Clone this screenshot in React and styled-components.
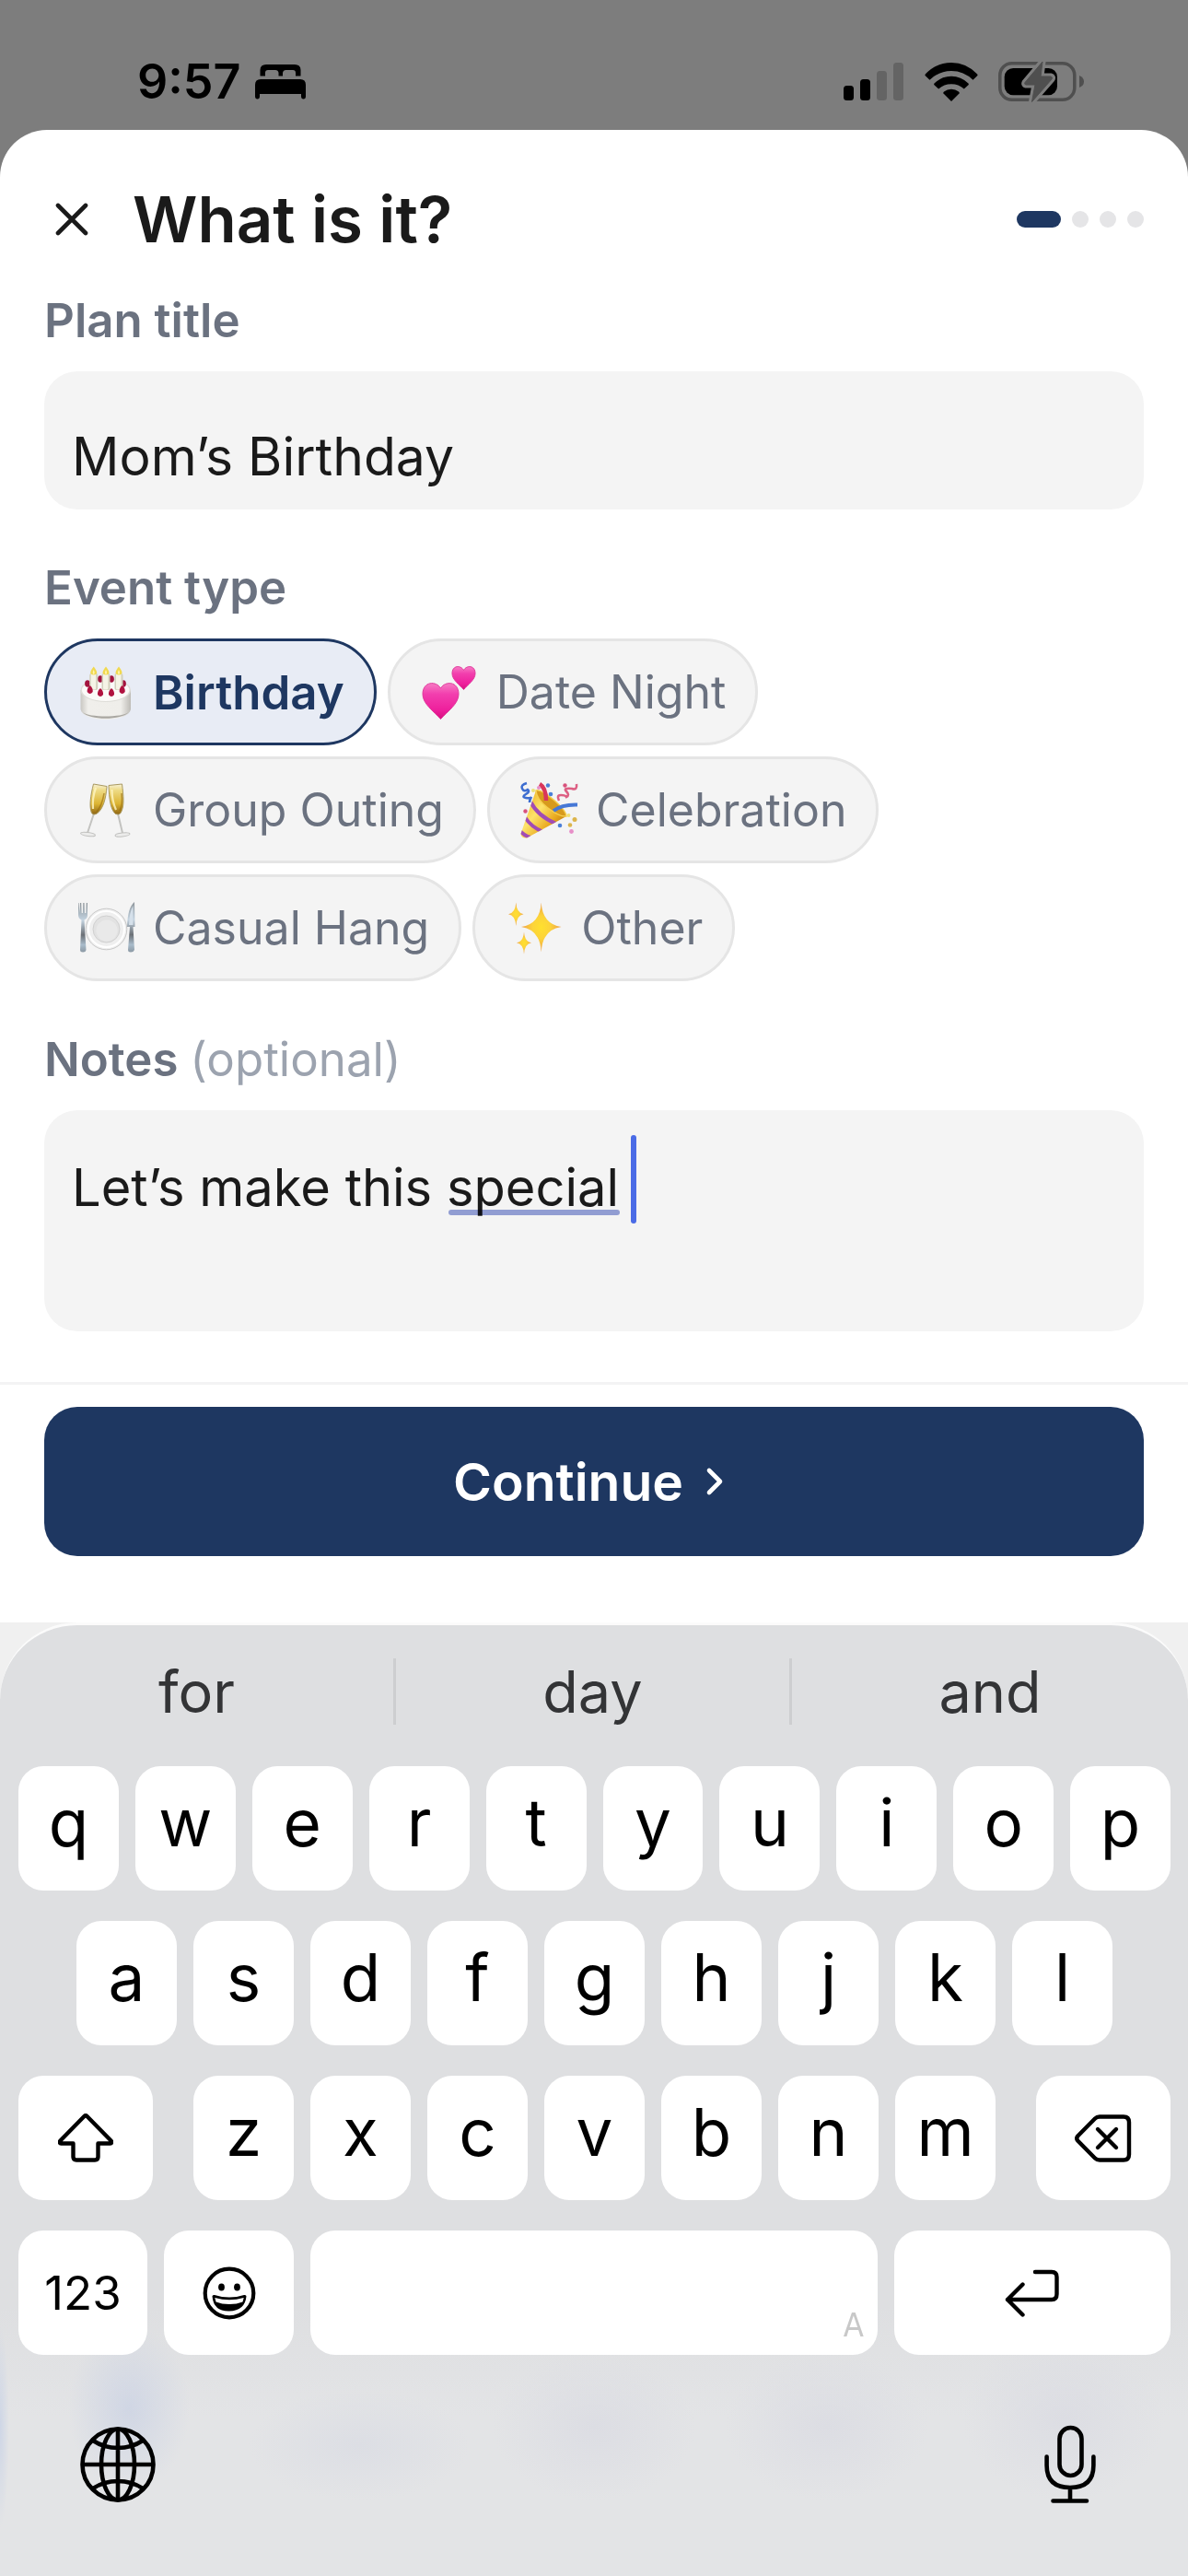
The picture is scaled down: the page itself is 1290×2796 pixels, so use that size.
import React, { useState } from 'react';
import styled, { createGlobalStyle } from 'styled-components';

const NAVY = '#1e3761';
const INK = '#1a1a1a';
const SLATE = '#6b7280';
const FIELD = '#f4f4f4';

const GlobalStyle = createGlobalStyle`
  * {
    box-sizing: border-box;
  }
  body {
    margin: 0;
    background: #7d7d7d;
    font-family: Inter, "Liberation Sans", sans-serif;
  }
  button, input, textarea {
    font-family: inherit;
    margin: 0;
    border: 0;
    padding: 0;
    outline: 0;
  }
  button {
    cursor: pointer;
  }
  svg {
    display: block;
    flex: none;
  }
`;

const Screen = styled.div`
  min-height: 100vh;
  display: flex;
  flex-direction: column;
`;

/* ---------- status bar ---------- */

const StatusBar = styled.header`
  height: 141px;
  padding: 36px 113px 0 149px;
  display: flex;
  align-items: center;
  justify-content: space-between;
`;

const StatusGroup = styled.div`
  display: flex;
  align-items: center;
  gap: ${(p) => p.$gap}px;
`;

const Clock = styled.time`
  font-size: 52px;
  line-height: 60px;
  font-weight: 600;
  color: #000;
`;

/* ---------- sheet ---------- */

const Sheet = styled.main`
  background: #fff;
  border-radius: 51px 51px 0 0;
`;

const SheetHeader = styled.div`
  display: flex;
  align-items: center;
  min-height: 97px;
  margin: 48px 48px 30px;
`;

const CloseButton = styled.button`
  width: 60px;
  height: 60px;
  display: grid;
  place-items: center;
  background: none;
`;

const Title = styled.h1`
  flex: 1;
  margin: 0 0 0 36px;
  font-size: 69px;
  line-height: 84px;
  font-weight: 600;
  color: ${INK};
`;

const Steps = styled.div`
  display: flex;
  gap: 12px;
`;

const Step = styled.span`
  width: ${(p) => (p.$active ? 48 : 18)}px;
  height: 18px;
  border-radius: 9px;
  background: ${(p) => (p.$active ? NAVY : '#e5e5e7')};
`;

const Form = styled.div`
  padding: 0 48px 55px;
  display: flex;
  flex-direction: column;
  gap: 53px;
`;

const Field = styled.div`
  display: flex;
  flex-direction: column;
  gap: 23px;
`;

const Label = styled.label`
  font-size: 51px;
  line-height: 64px;
  font-weight: 600;
  color: ${SLATE};
`;

const Hint = styled.span`
  font-weight: 400;
  color: #9ca3af;
`;

const TextInput = styled.input`
  width: 100%;
  height: 150px;
  padding: 34px 30px 0;
  border-radius: 36px;
  background: ${FIELD};
  color: ${INK};
  font-size: 57px;
`;

const NotesBox = styled.div`
  position: relative;
`;

const NotesInput = styled.textarea`
  display: block;
  width: 100%;
  height: 240px;
  padding: 48px 30px;
  border-radius: 36px;
  background: ${FIELD};
  color: ${INK};
  font-size: 56px;
  line-height: 72px;
  resize: none;
  caret-color: transparent;
`;

const Underline = styled.span`
  position: absolute;
  left: 439px;
  top: 108px;
  width: 186px;
  height: 6px;
  border-radius: 3px;
  background: #98a4dc;
  mix-blend-mode: multiply;
`;

const Caret = styled.span`
  position: absolute;
  left: 637px;
  top: 27px;
  width: 6px;
  height: 96px;
  border-radius: 3px;
  background: #4a6be6;
`;

const Chips = styled.div`
  display: flex;
  flex-wrap: wrap;
  gap: 12px;
  max-width: 960px;
`;

const Chip = styled.button`
  height: 116px;
  padding: 0 32px;
  display: flex;
  align-items: center;
  gap: 19px;
  border: 3px solid ${(p) => (p.$selected ? NAVY : '#e5e5e5')};
  border-radius: 58px;
  background: ${(p) => (p.$selected ? '#e8ecf5' : FIELD)};
  color: ${(p) => (p.$selected ? NAVY : SLATE)};
  font-size: ${(p) => (p.$selected ? 51 : 50)}px;
  font-weight: ${(p) => (p.$selected ? 600 : 400)};
`;

const SheetFooter = styled.div`
  border-top: 3px solid #f3f3f4;
  padding: 24px 48px 72px;
`;

const ContinueButton = styled.button`
  width: 100%;
  height: 162px;
  display: flex;
  align-items: center;
  justify-content: center;
  gap: 24px;
  padding-right: 8px;
  border-radius: 36px;
  background: ${NAVY};
  color: #fff;
  font-size: 57px;
  font-weight: 600;
`;

/* ---------- keyboard ---------- */

const KeyboardArea = styled.section`
  flex: 1;
  display: flex;
  background: #f0f0f0;
`;

const Keyboard = styled.div`
  flex: 1;
  display: flex;
  flex-direction: column;
  border-top: 3px solid #fbfbfb;
  border-radius: 84px 84px 0 0;
  background:
    radial-gradient(ellipse 66px 90px at 140px 850px, #d0d6e4 0%, #d0d6e400 100%),
    radial-gradient(ellipse 10px 110px at 0 870px, #ced6e6 0%, #ced6e600 100%),
    radial-gradient(ellipse 120px 60px at 390px 890px, #dcdee4 0%, #dcdee400 100%),
    radial-gradient(ellipse 110px 80px at 645px 870px, #dcdde3 0%, #dcdde300 100%),
    radial-gradient(ellipse 110px 80px at 898px 870px, #dcdde3 0%, #dcdde300 100%),
    radial-gradient(ellipse 110px 90px at 1155px 860px, #dcdde3 0%, #dcdde300 100%),
    linear-gradient(#dedfe1 740px, #e3e4e6 860px);
`;

const Suggestions = styled.div`
  display: grid;
  grid-template-columns: repeat(3, 1fr);
  align-items: center;
  height: 144px;
  margin-bottom: 9px;
`;

const Suggestion = styled.button`
  height: 72px;
  background: none;
  color: #333436;
  font-size: 63px;
  line-height: 72px;

  &:not(:last-child) {
    border-right: 3px solid #cdced0;
  }
`;

const Rows = styled.div`
  display: flex;
  flex-direction: column;
  gap: 33px;
  padding: 0 19px 0 20px;
`;

const KeyRow = styled.div`
  display: flex;
  justify-content: space-between;
  gap: 18px;
  padding: 0 ${(p) => p.$inset || 0}px;
`;

const KeyGroup = styled.div`
  flex: 1;
  display: flex;
  gap: 18px;
  margin: 0 26px;
`;

const Key = styled.button`
  position: relative;
  flex: ${(p) => (p.$width ? `0 0 ${p.$width}px` : '1 1 0')};
  min-width: 0;
  height: 135px;
  padding-bottom: ${(p) => (p.$flat ? 0 : 13)}px;
  display: flex;
  align-items: center;
  justify-content: center;
  border-radius: 27px;
  background: #fff;
  color: #000;
  font-size: ${(p) => (p.$flat ? 51 : 71)}px;
`;

const Language = styled.span`
  position: absolute;
  right: 15px;
  bottom: 10px;
  color: #c8c8c8;
  font-family: "Liberation Sans Narrow", "DejaVu Sans Condensed", sans-serif;
  font-size: 36px;
  line-height: 44px;
`;

const KeyboardFooter = styled.div`
  display: flex;
  align-items: center;
  justify-content: space-between;
  padding: 76px 100px 0 87px;
`;

const BareButton = styled.button`
  background: none;
`;

/* ---------- icons ---------- */

const BedIcon = () => (
  <svg width="55" height="38" viewBox="0 0 55 38">
    <path d="M5.500 12.500V6Q5.500 0 12 0H43Q49.500 0 49.500 6V12.500H44V9Q44 6 41 6H33.500Q30.500 6 30 9V12.500H25.500V9Q25 6 22 6H14Q11 6 11 9V12.500Z" />
    <path d="M0 22Q0 16 6 16H49Q55 16 55 22V34.500Q55 37.500 52.500 37.500T50 34.500V32H5V34.500Q5 37.500 2.500 37.500T0 34.500Z" />
  </svg>
);

const SignalIcon = () => (
  <svg width="66" height="42" viewBox="0 0 66 42">
    <rect x="0" y="25" width="11" height="16" rx="3.500" />
    <rect x="18" y="18" width="11" height="23" rx="3.500" />
    <rect x="36" y="9" width="11" height="32" rx="3.500" fill="#646464" />
    <rect x="54" y="0" width="11" height="41" rx="3.500" fill="#646464" />
  </svg>
);

const WifiIcon = () => (
  <svg width="58" height="42" viewBox="0 0 58 42">
    <path d="M29 42 20.500 33.500Q19.800 32.500 21 31.500Q24.500 28.800 29 28.800T37 31.500Q38.200 32.500 37.500 33.500Z" />
    <path d="M10.500 22.500Q18.500 14.700 29 14.700T47.500 22.500Q48.200 23.500 47.500 24.300L42.800 28.500Q37 23.300 29 23.300T15.200 28.500L10.500 24.300Q9.800 23.500 10.500 22.500Z" />
    <path d="M.8 12.500Q12.500 0 29 0T57.200 12.500Q57.900 13.500 57.200 14.300L52.500 18.800Q42.500 9 29 9T5.500 18.800L.8 14.300Q.1 13.500.8 12.500Z" />
  </svg>
);

const BatteryIcon = () => (
  <svg width="93" height="46" viewBox="0 -1 93 46">
    <rect x="1.800" y="1.800" width="81" height="39.500" rx="13" fill="none" stroke="#4f4f4f" strokeWidth="3.500" />
    <path d="M88 15Q93 17 93 21.500T88 28Z" fill="#4f4f4f" />
    <rect x="6.700" y="7" width="57.300" height="29.300" rx="9.500" />
    <path
      d="M48 0 29 22.500Q28 24.500 30 25H40L36.500 43.500 58 19Q59.500 16.500 57 16H46Z"
      fill="none"
      stroke="#7d7d7d"
      strokeWidth="7"
      strokeLinejoin="round"
    />
    <path
      d="M48 0 29 22.500Q28 24.500 30 25H40L36.500 43.500 58 19Q59.500 16.500 57 16H46Z"
      fill="#4f4f4f"
      stroke="#4f4f4f"
      strokeLinejoin="round"
    />
  </svg>
);

const CloseIcon = () => (
  <svg width="36" height="36" viewBox="0 0 36 36" fill="none" stroke={INK} strokeWidth="4.600" strokeLinecap="round">
    <path d="M3 3 33 33M33 3 3 33" />
  </svg>
);

const ChevronIcon = () => (
  <svg width="24" height="32" viewBox="0 0 24 32" fill="none" stroke="#fff" strokeWidth="4.600" strokeLinecap="round" strokeLinejoin="round">
    <path d="M4 4 16 16 4 28" />
  </svg>
);

const ShiftIcon = () => (
  <svg width="60" height="53" viewBox="0 0 60 53" fill="none" stroke="#000" strokeWidth="4.400" strokeLinejoin="round">
    <path d="M28.500 3Q30 1.500 31.500 3L57.500 29.500Q59.500 32.200 56.500 32.500H43.500V47Q43.500 50.500 40 50.500H20Q16.500 50.500 16.500 47V32.500H3.500Q.5 32.200 2.500 29.500Z" />
  </svg>
);

const DeleteIcon = () => (
  <svg width="62" height="52" viewBox="0 0 62 52" fill="none" stroke="#000" strokeWidth="4.400" strokeLinecap="round" strokeLinejoin="round">
    <path d="M27 2.500H53Q59 2.500 59 8.500V43.500Q59 49.500 53 49.500H27Q24 49.500 22 47.500L3.500 28.800Q1 26 3.500 23.200L22 4.500Q24 2.500 27 2.500Z" />
    <path d="M25 16 45 36M45 16 25 36" />
  </svg>
);

const ReturnIcon = () => (
  <svg width="60" height="52" viewBox="0 0 60 52" fill="none" stroke="#000" strokeWidth="4.400" strokeLinecap="round" strokeLinejoin="round">
    <path d="M33 3H51Q56.500 3 56.500 8.500V27Q56.500 33 51 33H3M19.500 16.500 3 33 19.500 49.500" />
  </svg>
);

const SmileyIcon = () => (
  <svg width="58" height="58" viewBox="0 0 58 58">
    <circle cx="29" cy="29" r="26.300" fill="none" stroke="#000" strokeWidth="4.200" />
    <ellipse cx="20.500" cy="22.500" rx="3.400" ry="4" />
    <ellipse cx="37.500" cy="22.500" rx="3.400" ry="4" />
    <path d="M10.500 32.500Q10.500 30.500 13 31Q29 36 45 31Q47.500 30.500 47.500 32.500Q46 48 29 48.500T10.500 32.500Z" />
    <path d="M13.300 34Q29 38.500 44.700 34L43.500 38.500Q37 41 29 41T14.500 38.500Z" fill="#fff" />
  </svg>
);

const GlobeIcon = () => (
  <svg width="82" height="82" viewBox="0 0 82 82" fill="none" stroke="#000" strokeWidth="4.600">
    <circle cx="41" cy="41" r="38.500" />
    <ellipse cx="41" cy="41" rx="18" ry="38.500" />
    <path d="M41 2V80M2 41H80M14 15Q26 23 41 23T68 15M14 67Q26 59 41 59T68 67" />
  </svg>
);

const MicIcon = () => (
  <svg width="56" height="86" viewBox="0 0 56 86" fill="none" stroke="#000" strokeWidth="4.600" strokeLinecap="round">
    <rect x="16.500" y="3" width="24" height="52" rx="12" />
    <path d="M2.600 34.500V44Q2.600 68 28 68T53.400 44V34.500M28 68V82M9.500 82.500H46" />
  </svg>
);

/* ---------- event type pictures ---------- */

const CakeIcon = () => (
  <svg width="64" height="64" viewBox="0 0 64 64">
    <defs>
      <linearGradient id="cakeSide">
        <stop offset="0" stopColor="#c9c7c2" />
        <stop offset="0.150" stopColor="#f0efeb" />
        <stop offset="0.800" stopColor="#efeeea" />
        <stop offset="1" stopColor="#bdbbb6" />
      </linearGradient>
    </defs>
    <path d="M4.500 30V51C6 58 18 62 31.700 62S57.500 58 59 51V30Z" fill="url(#cakeSide)" />
    <path d="M7 54C13 63 50 63 56.500 54C50 60 13 60 7 54Z" fill="#a9a7a1" />
    <ellipse cx="31.700" cy="30" rx="27.300" ry="13" fill="#deddd8" />
    <ellipse cx="31.700" cy="30" rx="25.800" ry="12" fill="#fbfaf8" />
    {[[12, 23], [26, 18], [38, 18], [51, 23]].map(([x, y]) => (
      <ellipse key={x} cx={x} cy={y} rx="2.900" ry="3.800" fill="#a3133e" />
    ))}
    {[18.700, 32, 46].map((x) => (
      <g key={x}>
        <rect x={x - 4.500} y="12" width="9" height="18" rx="2" fill="#d2d0bd" />
        <rect x={x - 3} y="12" width="5.500" height="17.500" rx="1.500" fill="#f5f4e6" />
        <path d={`M${x} 4.500Q${x + 4} 9.500 ${x + 3.400} 12Q${x} 15 ${x - 3.400} 12Q${x - 4} 9.500 ${x} 4.500Z`} fill="#f1d94f" />
        <path d={`M${x} 8Q${x + 2} 12 ${x} 13Q${x - 2} 12 ${x} 8Z`} fill="#fff6b0" />
      </g>
    ))}
    {[[14.700, 30], [26, 33], [38, 33], [49.700, 30]].map(([x, y]) => (
      <path key={x} d={`M${x} ${y - 5}Q${x + 3.500} ${y - 2} ${x + 3} ${y + 2}Q${x} ${y + 6} ${x - 3} ${y + 2}Q${x - 3.500} ${y - 2} ${x} ${y - 5}Z`} fill="#b0123f" />
    ))}
  </svg>
);

const HeartsIcon = () => (
  <svg width="64" height="64" viewBox="0 0 64 64">
    <defs>
      <linearGradient id="heart" x2="0" y2="1">
        <stop offset="0" stopColor="#f77cc4" />
        <stop offset="0.300" stopColor="#f23fae" />
        <stop offset="0.750" stopColor="#ee1f9c" />
        <stop offset="1" stopColor="#d4107f" />
      </linearGradient>
    </defs>
    <path d="M22.500 28C18 20 3 20 3 34.500C3 45 15 53 22.500 61.500C30 53 42 45 42 34.500C42 20 27 20 22.500 28Z" fill="url(#heart)" stroke="#e0379b" />
    <path d="M47.500 8.500C44.500 2.800 35 2.800 35 12C35 19 43 24 47.500 29.500C52 24 60 19 60 12C60 2.800 50.500 2.800 47.500 8.500Z" fill="url(#heart)" stroke="#e0379b" />
  </svg>
);

const GlassesIcon = () => (
  <svg width="64" height="64" viewBox="0 0 64 64">
    <defs>
      <linearGradient id="wine" x2="0" y2="1">
        <stop offset="0" stopColor="#f7f2d8" />
        <stop offset="0.200" stopColor="#eedb86" />
        <stop offset="0.650" stopColor="#dcb432" />
        <stop offset="1" stopColor="#8d6414" />
      </linearGradient>
    </defs>
    <g fill="none" stroke="#c3c3c0" strokeWidth="2">
      <path d="M19 36 12 57M45 36 50 57" />
    </g>
    <g fill="#ececeb" stroke="#c0c0be">
      <ellipse cx="12.500" cy="58.500" rx="8" ry="1.900" transform="rotate(8 12.500 58.500)" />
      <ellipse cx="50" cy="59" rx="8" ry="1.900" transform="rotate(-6 50 59)" />
    </g>
    <g fill="url(#wine)" stroke="#a99960">
      <path d="M18.500 4 33 6.500C32 20 29 32 21.500 36.500Q18.500 38 16.500 35.500C13.500 28 15.500 16 18.500 4Z" />
      <path d="M49.500 4 35 5.500C35.500 20 37 32 42.500 36.500Q46 38 48 35.500C52.500 28 51 16 49.500 4Z" />
    </g>
    <path d="M21 8Q17 19 18 31M38.500 10Q38.500 22 43 32" fill="none" stroke="#fff6c4" strokeWidth="2.200" opacity="0.800" />
    <path d="M30 14Q28 27 22 34M49 14Q50.500 26 47 33" fill="none" stroke="#94690f" strokeWidth="1.600" opacity="0.600" />
  </svg>
);

const PartyIcon = () => (
  <svg width="64" height="64" viewBox="0 0 64 64">
    <defs>
      <linearGradient id="cone" x1="0" y1="0.300" x2="0.800" y2="1">
        <stop offset="0" stopColor="#f0b92a" />
        <stop offset="0.350" stopColor="#fde36b" />
        <stop offset="0.700" stopColor="#e9a81e" />
        <stop offset="1" stopColor="#a8680d" />
      </linearGradient>
      <clipPath id="coneClip">
        <path d="M18 11 1.500 58Q2 63 8 62.500L51 39Q42 18 18 11Z" />
      </clipPath>
    </defs>
    <path d="M18 11 1.500 58Q2 63 8 62.500L51 39Q42 18 18 11Z" fill="url(#cone)" />
    <g clipPath="url(#coneClip)" fill="none" stroke="#a14cb5" strokeWidth="4">
      <path d="M12 23Q20 39 40 47M6 40Q13 51 26 56M0 54Q5 60 12 62" />
    </g>
    <path d="M18 11Q23 9 37 21T51 39Q44 40 31 30T18 11Z" fill="#d79a1d" stroke="#f6cf4e" strokeWidth="1.500" />
    <path d="M22 4Q29 8 29 22" fill="none" stroke="#d9365b" strokeWidth="4.500" />
    <path d="M37 33Q46 26 63 26.500" fill="none" stroke="#4678d6" strokeWidth="4" />
    <path d="M8 3Q1 5 3 9T9 10Q12 12 7 15T7 19T13 18Q11 21 11 24" fill="none" stroke="#3d6dd0" strokeWidth="2.600" />
    <path d="M43 22Q40 16 45 16T51 18Q55 16 51 12T57 9Q63 11 62 4" fill="none" stroke="#dd5f83" strokeWidth="2.600" />
    <g fill="#4c7fd8">
      <circle cx="31" cy="5.500" r="2.200" />
      <circle cx="34" cy="15" r="2.300" />
      <circle cx="44" cy="49" r="2.300" />
    </g>
    <g fill="#d8527c">
      <circle cx="49.500" cy="5.500" r="2.200" />
      <circle cx="6.500" cy="33.500" r="2.200" />
      <circle cx="56.500" cy="55.500" r="2.400" fill="#e78fc8" />
      <circle cx="21" cy="8" r="2" fill="#e78fc8" />
    </g>
    <g fill="#dcb54b">
      <circle cx="15" cy="11" r="2" fill="#e9e07a" />
      <circle cx="53.500" cy="38" r="2" fill="#f0df74" />
      <circle cx="60" cy="42.500" r="2.500" />
      <circle cx="55" cy="48.500" r="2.300" />
    </g>
  </svg>
);

const PlateIcon = () => (
  <svg width="64" height="64" viewBox="0 0 64 64">
    <defs>
      <linearGradient id="steel" x2="0" y2="1">
        <stop offset="0" stopColor="#8d9499" />
        <stop offset="0.350" stopColor="#c3d3e0" />
        <stop offset="0.650" stopColor="#6b7076" />
        <stop offset="0.850" stopColor="#a9bccb" />
        <stop offset="1" stopColor="#8b98a3" />
      </linearGradient>
    </defs>
    <circle cx="32.500" cy="33.500" r="22.300" fill="#efefef" stroke="#c9c9c9" />
    <circle cx="32.500" cy="33.500" r="19.500" fill="none" stroke="#fff" strokeWidth="2" />
    <circle cx="32.500" cy="33.500" r="14.500" fill="#e2e2e2" stroke="#d0d0d0" />
    <circle cx="33" cy="35" r="11.500" fill="#e9e9e9" />
    <path d="M2 5V18Q2 22 5.500 23.500L4 56Q4 58.500 7 58.500T10.500 56L8.500 23.500Q12 22 12 18V5H10.800L10.300 16H9L8.500 5H7.300L6.900 16H5.700L5.200 5H4L3.500 16L2.500 5Z" fill="url(#steel)" />
    <path d="M63 4Q55.500 10 55 31H58L56 56Q56 58.500 59 58.500T63 56L61.500 31H63.500Z" fill="url(#steel)" />
    <path d="M61.500 8Q57.500 15 57 29H61.500Z" fill="#d5e0ea" />
  </svg>
);

const SparklesIcon = () => (
  <svg width="64" height="64" viewBox="0 0 64 64">
    <defs>
      <radialGradient id="spark">
        <stop offset="0" stopColor="#ffe02e" />
        <stop offset="0.450" stopColor="#fcd33a" />
        <stop offset="1" stopColor="#eea04b" />
      </radialGradient>
    </defs>
    <g fill="url(#spark)">
      <path d="M39.700 4.500Q41 28 61.500 31Q41 34 39.700 58.500Q38.400 34 18 31Q38.400 28 39.700 4.500Z" />
      <path d="M12.300 4.500Q13 16 20.500 17.300Q13 18.600 12.300 30Q11.600 18.600 4 17.300Q11.600 16 12.300 4.500Z" />
      <path d="M21 36.500Q21.700 47 29 48.300Q21.700 49.600 21 60.500Q20.300 49.600 13 48.300Q20.300 47 21 36.500Z" />
    </g>
  </svg>
);

const EVENT_TYPES = [
  { name: 'Birthday', Icon: CakeIcon },
  { name: 'Date Night', Icon: HeartsIcon },
  { name: 'Group Outing', Icon: GlassesIcon },
  { name: 'Celebration', Icon: PartyIcon },
  { name: 'Casual Hang', Icon: PlateIcon },
  { name: 'Other', Icon: SparklesIcon },
];

const letters = (row) => [...row].map((char) => <Key key={char} type="button">{char}</Key>);

export default function App() {
  const [title, setTitle] = useState('Mom’s Birthday');
  const [notes, setNotes] = useState('Let’s make this special ');
  const [eventType, setEventType] = useState('Birthday');

  return (
    <Screen>
      <GlobalStyle />

      <StatusBar>
        <StatusGroup $gap={15}>
          <Clock>9:57</Clock>
          <BedIcon />
        </StatusGroup>
        <StatusGroup $gap={22}>
          <SignalIcon />
          <WifiIcon />
          <BatteryIcon />
        </StatusGroup>
      </StatusBar>

      <Sheet>
        <SheetHeader>
          <CloseButton type="button" aria-label="Close">
            <CloseIcon />
          </CloseButton>
          <Title>What is it?</Title>
          <Steps>
            <Step $active />
            <Step />
            <Step />
            <Step />
          </Steps>
        </SheetHeader>

        <Form>
          <Field>
            <Label htmlFor="plan-title">Plan title</Label>
            <TextInput id="plan-title" value={title} onChange={(e) => setTitle(e.target.value)} />
          </Field>

          <Field>
            <Label as="div" id="event-type">Event type</Label>
            <Chips role="group" aria-labelledby="event-type">
              {EVENT_TYPES.map(({ name, Icon }) => (
                <Chip
                  key={name}
                  type="button"
                  $selected={name === eventType}
                  aria-pressed={name === eventType}
                  onClick={() => setEventType(name)}
                >
                  <Icon />
                  {name}
                </Chip>
              ))}
            </Chips>
          </Field>

          <Field>
            <Label htmlFor="notes">
              Notes <Hint>(optional)</Hint>
            </Label>
            <NotesBox>
              <NotesInput id="notes" spellCheck={false} value={notes} onChange={(e) => setNotes(e.target.value)} />
              <Underline />
              <Caret />
            </NotesBox>
          </Field>
        </Form>

        <SheetFooter>
          <ContinueButton type="button">
            Continue
            <ChevronIcon />
          </ContinueButton>
        </SheetFooter>
      </Sheet>

      <KeyboardArea>
        <Keyboard>
          <Suggestions>
            <Suggestion type="button">for</Suggestion>
            <Suggestion type="button">day</Suggestion>
            <Suggestion type="button">and</Suggestion>
          </Suggestions>

          <Rows>
            <KeyRow>{letters('qwertyuiop')}</KeyRow>
            <KeyRow $inset={63}>{letters('asdfghjkl')}</KeyRow>
            <KeyRow>
              <Key type="button" $width={146} $flat aria-label="Shift"><ShiftIcon /></Key>
              <KeyGroup>{letters('zxcvbnm')}</KeyGroup>
              <Key type="button" $width={146} $flat aria-label="Delete"><DeleteIcon /></Key>
            </KeyRow>
            <KeyRow>
              <Key type="button" $width={140} $flat>123</Key>
              <Key type="button" $width={141} $flat aria-label="Emoji"><SmileyIcon /></Key>
              <Key type="button" $flat aria-label="Space"><Language>A</Language></Key>
              <Key type="button" $width={300} $flat aria-label="Return"><ReturnIcon /></Key>
            </KeyRow>
          </Rows>

          <KeyboardFooter>
            <BareButton type="button" aria-label="Next keyboard"><GlobeIcon /></BareButton>
            <BareButton type="button" aria-label="Dictate"><MicIcon /></BareButton>
          </KeyboardFooter>
        </Keyboard>
      </KeyboardArea>
    </Screen>
  );
}
